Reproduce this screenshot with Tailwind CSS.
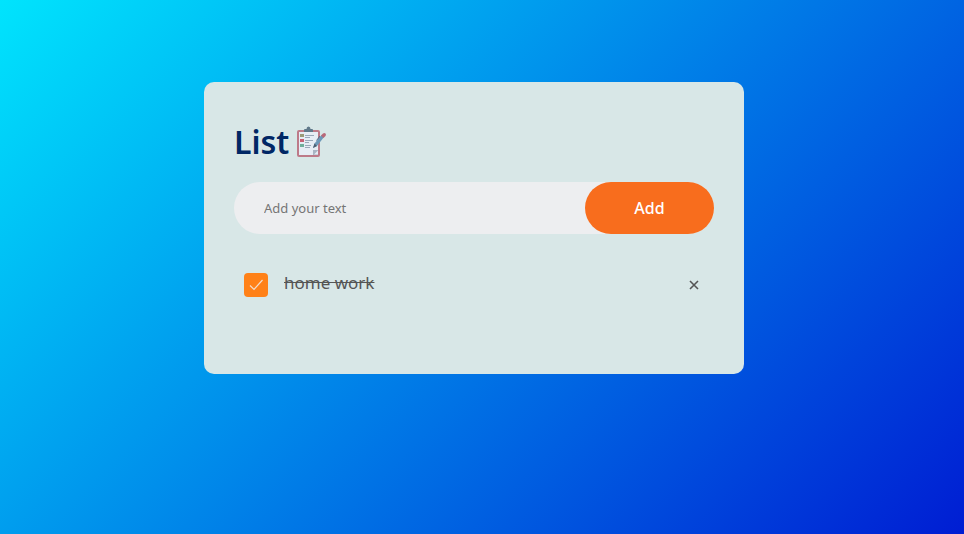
<!DOCTYPE html>
<html lang="en">
<head>
<meta charset="utf-8">
<meta name="viewport" content="width=device-width, initial-scale=1">
<title>List</title>
<script src="https://cdn.jsdelivr.net/npm/@tailwindcss/browser@4"></script>
</head>
<body class="font-['Noto_Sans',sans-serif]">
<div class="min-h-screen w-full bg-[linear-gradient(135deg,#00e4fd,#001dd3)] pt-[82px] pr-4">
  <main class="mx-auto w-full max-w-[540px] rounded-[10px] bg-[#d8e7e7] px-[30px] pt-10 pb-[67px]">
    <h1 class="mb-5 flex h-10 items-center gap-[6px] text-[32px] leading-10 font-semibold text-[#002765]">
      List
      <svg class="size-8" viewBox="0 0 32 32" fill="none" aria-hidden="true">
        <rect x="2" y="4" width="23" height="27" rx="2" fill="#bd7a89"/>
        <path d="M4 6h19v19l-4 4H4z" fill="#e6edf5"/>
        <path d="M18 29v-5h5v5z" fill="#a9b5c4"/>
        <path d="M19 28.500l4-4v4z" fill="#e6edf5"/>
        <path d="M9 6V4q0-1 1-1h1.500q0-2.500 2-2.500t2 2.500H17q1 0 1 1v2z" fill="#60798a"/>
        <path d="M5 8h4v3H5z" fill="#9a9a78"/>
        <path d="M5 13h4v3H5z" fill="#c65f74"/>
        <path d="M5 18h4v3H5z" fill="#6fae9b"/>
        <path d="M10 9.500h9M10 11.500h5M10 14.500h8M10 16.500h4M10 19.500h6M10 21.500h5" stroke="#9aa9ba"/>
        <path d="M18 22l1.500-4.500L26.500 9l2.500 2-7 9z" fill="#6c98b8"/>
        <path d="M18 22l1.500-4.500 2.500 2.500z" fill="#4d5f72"/>
        <path d="M26 9.500l2-2q1.500-1 2.500 0t0 2.500L28.500 12z" fill="#b86878"/>
        <path d="M25 10l-3.500 4.500" stroke="#506b86"/>
      </svg>
    </h1>
    <form class="mb-7 flex h-[52px] items-stretch rounded-full bg-[#edeef0]" onsubmit="return false">
      <input type="text" aria-label="Add your text" placeholder="Add your text" class="min-w-0 flex-1 bg-transparent pt-[2px] pl-[30px] text-[13px] text-[#555] outline-none placeholder:text-[#757575]">
      <button type="submit" class="w-[129px] rounded-full bg-[#f86d1d] text-base font-medium text-white">Add</button>
    </form>
    <ul>
      <li class="flex h-[45px] items-center justify-between pr-[13px] pl-[10px]">
        <label class="flex items-center gap-4">
          <input type="checkbox" checked class="peer sr-only">
          <svg class="size-6 shrink-0" viewBox="0 0 24 24" fill="none" aria-hidden="true">
            <rect width="24" height="24" rx="4" fill="#ff8118"/>
            <path d="M6 12.500l4 4L18.500 7" stroke="#f3ddcb" stroke-width="1.200"/>
          </svg>
          <span class="pb-1 text-[17px] leading-6 text-[#555] line-through">home work</span>
        </label>
        <button type="button" aria-label="Delete home work" class="flex size-[14px] items-center justify-center">
          <svg class="size-[10px]" viewBox="0 0 10 10" fill="none" aria-hidden="true"><path d="M1 1l8 8M9 1L1 9" stroke="#555" stroke-width="1.600"/></svg>
        </button>
      </li>
    </ul>
  </main>
</div>
</body>
</html>
